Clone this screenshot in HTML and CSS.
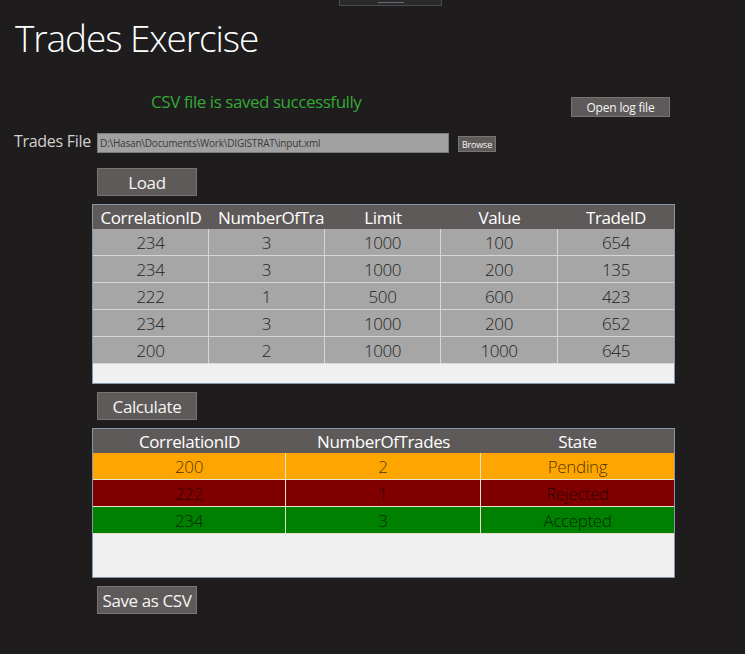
FILE: index.html
```html
<!DOCTYPE html>
<html>
<head>
<meta charset="utf-8">
<title>Trades Exercise</title>
<link rel="stylesheet" href="styles.css">
</head>
<body>
<div class="topbar"><div class="topbar-line"></div></div>
<main class="page">
  <h1 class="title">Trades Exercise</h1>
  <div class="status-row">
    <span class="status">CSV file is saved successfully</span>
    <button class="btn btn-log">Open log file</button>
  </div>
  <div class="file-row">
    <span class="file-label">Trades File</span>
    <div class="file-input">D:\Hasan\Documents\Work\DIGISTRAT\input.xml</div>
    <button class="btn btn-browse">Browse</button>
  </div>
  <div class="content">
    <button class="btn btn-big">Load</button>
    <div class="grid grid-trades">
      <div class="head">
        <div>CorrelationID</div><div class="clip">NumberOfTra</div><div>Limit</div><div>Value</div><div>TradeID</div>
      </div>
      <div class="row"><div>234</div><div>3</div><div>1000</div><div>100</div><div>654</div></div>
      <div class="row"><div>234</div><div>3</div><div>1000</div><div>200</div><div>135</div></div>
      <div class="row"><div>222</div><div>1</div><div>500</div><div>600</div><div>423</div></div>
      <div class="row"><div>234</div><div>3</div><div>1000</div><div>200</div><div>652</div></div>
      <div class="row"><div>200</div><div>2</div><div>1000</div><div>1000</div><div>645</div></div>
      <div class="filler f1"></div>
    </div>
    <button class="btn btn-big">Calculate</button>
    <div class="grid grid-result">
      <div class="head">
        <div>CorrelationID</div><div>NumberOfTrades</div><div>State</div>
      </div>
      <div class="row pending"><div>200</div><div>2</div><div>Pending</div></div>
      <div class="row rejected"><div>222</div><div>1</div><div>Rejected</div></div>
      <div class="row accepted"><div>234</div><div>3</div><div>Accepted</div></div>
      <div class="filler f2"></div>
    </div>
    <button class="btn btn-big">Save as CSV</button>
  </div>
</main>
</body>
</html>
```
FILE: styles.css
```css
html, body {
  margin: 0;
  padding: 0;
  background: #1e1c1d;
  height: 100%;
}
body {
  font-family: "Open Sans", "Noto Sans", "DejaVu Sans", sans-serif;
  color: #f0f0f0;
  overflow: hidden;
}
.topbar {
  margin-left: 339px;
  width: 101px;
  height: 5px;
  background: #2a292c;
  border: 1px solid #4a494d;
  border-top: none;
  display: flex;
  justify-content: center;
}
.topbar-line {
  margin-top: 2px;
  width: 26px;
  height: 1px;
  background: #6a6a6e;
}
.page {
  padding-left: 14px;
}
.title {
  margin: 9px 0 0 1px;
  font-size: 37px;
  line-height: 46px;
  font-weight: 300;
  letter-spacing: -1.1px;
  color: #ffffff;
}
.status-row {
  display: flex;
  align-items: flex-start;
  margin-top: 29px;
  height: 42px;
}
.status {
  margin-left: 137px;
  font-size: 17px;
  line-height: 24px;
  color: #35a835;
  font-weight: 400;
  letter-spacing: -0.45px;
  width: 420px;
}
.btn {
  font-family: inherit;
  background: #5e5a5a;
  border: 1px solid #777474;
  color: #f4f4f4;
  padding: 0;
  margin: 0;
  display: flex;
  align-items: center;
  justify-content: center;
}
.btn-log {
  margin-top: 7px;
  width: 99px;
  height: 20px;
  font-size: 12px;
  letter-spacing: -0.2px;
}
.file-row {
  display: flex;
  align-items: center;
  height: 22px;
}
.file-label {
  font-size: 16px;
  color: #d4d0d0;
  width: 83px;
  letter-spacing: -0.3px;
  line-height: 20px;
  margin-top: -4px;
}
.file-input {
  width: 348px;
  height: 18px;
  background: #a1a1a1;
  border: 1px solid #7d7d7d;
  color: #3a3a3a;
  font-size: 10px;
  line-height: 18px;
  padding-left: 2px;
  box-sizing: content-box;
  letter-spacing: -0.2px;
}
.btn-browse {
  margin-left: 9px;
  margin-top: 2px;
  width: 38px;
  height: 16px;
  font-size: 9px;
  letter-spacing: -0.2px;
}
.content {
  margin-left: 78px;
  margin-top: 14px;
  display: flex;
  flex-direction: column;
  align-items: flex-start;
}
.btn-big {
  margin-left: 5px;
  width: 100px;
  height: 28px;
  font-size: 17px;
  letter-spacing: -0.4px;
}
.grid {
  width: 581px;
  border: 1px solid #8796ad;
  margin: 8px 0;
  background: #f0f0f0;
}
.grid .head, .grid .row {
  display: grid;
}
.grid-trades .head, .grid-trades .row {
  grid-template-columns: 116px 116px 116px 117px 116px;
}
.grid-result .head, .grid-result .row {
  grid-template-columns: 193px 195px 193px;
}
.head {
  background: #5f5a5a;
  height: 24px;
}
.head > div {
  text-align: center;
  font-size: 17px;
  line-height: 25px;
  color: #ffffff;
  white-space: nowrap;
  letter-spacing: -0.4px;
}
.head > div.clip {
  text-align: left;
  padding-left: 9px;
}
.row {
  background: #a6a6a6;
}
.row > div {
  text-align: center;
  font-size: 17px;
  font-weight: 300;
  line-height: 27px;
  height: 26px;
  color: #1e1e1e;
  border-bottom: 1px solid #d6d6d6;
  border-right: 1px solid #d6d6d6;
  letter-spacing: -0.4px;
}
.row > div:last-child {
  border-right: none;
}
.grid-result .row > div {
  color: rgba(0, 0, 0, 0.72);
  border-color: #e8e2d0;
}
.pending { background: #ffa500; }
.rejected { background: #800000; }
.accepted { background: #008000; }
.f1 { height: 19px; }
.f2 { height: 43px; }
```
